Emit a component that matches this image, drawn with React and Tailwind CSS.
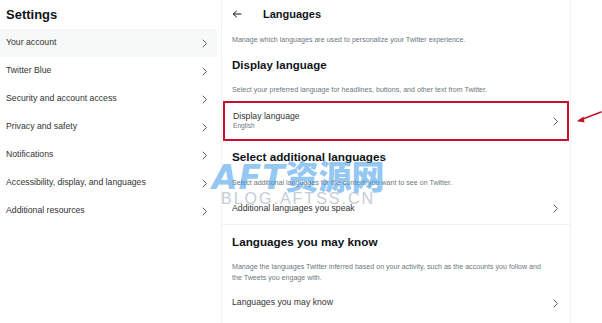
import React from "react";

const Chevron = () => (
  <svg width="6" height="9" viewBox="0 0 6 9" fill="none">
    <path d="M1 1l3.5 3.5L1 8" stroke="#536471" strokeWidth="1" strokeLinecap="round" strokeLinejoin="round" />
  </svg>
);

const leftItems = [
  "Your account",
  "Twitter Blue",
  "Security and account access",
  "Privacy and safety",
  "Notifications",
  "Accessibility, display, and languages",
  "Additional resources",
];

export default function App() {
  return (
    <div
      className="relative w-[602px] h-[323px] overflow-hidden bg-white flex text-[#0f1419]"
      style={{ fontFamily: '"Liberation Sans", Arial, sans-serif' }}
    >
      {/* Left column */}
      <div className="w-[222px] shrink-0 border-r border-[#eff3f4] flex flex-col">
        <div className="h-[29px] flex items-center pl-[6px] text-[13px] font-bold">Settings</div>
        {leftItems.map((t, i) => (
          <div
            key={t}
            className={`h-[28px] flex items-center justify-between pl-[6px] pr-[9px] mr-[4px] text-[8.7px] text-[#333] ${
              i === 0 ? "bg-[#f7f8f8]" : ""
            }`}
          >
            <span>{t}</span>
            <Chevron />
          </div>
        ))}
      </div>

      {/* Right column */}
      <div className="w-[349px] shrink-0 border-r border-[#eff3f4] flex flex-col">
        <div className="h-[28px] flex items-center pl-[10px]">
          <svg width="10" height="8" viewBox="0 0 10 8" fill="none">
            <path d="M9 4H1.5M4.5 1L1.2 4l3.3 3" stroke="#0f1419" strokeWidth="1" strokeLinecap="round" strokeLinejoin="round" />
          </svg>
          <span className="ml-[21px] text-[11px] font-bold">Languages</span>
        </div>
        <div className="h-[24px] flex items-center pl-[10px] text-[7.1px] text-[#6b7780]">
          Manage which languages are used to personalize your Twitter experience.
        </div>
        <div className="h-[28px] flex items-center pl-[10px] text-[11.5px] font-bold">Display language</div>
        <div className="h-[21px] flex items-center pl-[10px] text-[7.1px] text-[#6b7780]">
          Select your preferred language for headlines, buttons, and other text from Twitter.
        </div>
        <div className="h-[40px] mx-[1px] border-[2.5px] border-[#c8102e] flex items-center justify-between pl-[8px] pr-[8px]">
          <div className="flex flex-col leading-[10px]">
            <span className="text-[8.7px] text-[#333]">Display language</span>
            <span className="text-[6.6px] text-[#6b7780]">English</span>
          </div>
          <Chevron />
        </div>
        <div className="h-[32px] flex items-center pl-[10px] text-[11.7px] font-bold">Select additional languages</div>
        <div className="h-[20px] flex items-center pl-[10px] text-[7.1px] text-[#6b7780]">
          Select additional languages for the content you want to see on Twitter.
        </div>
        <div className="h-[32px] flex items-center justify-between pl-[10px] pr-[11px] text-[8.7px] text-[#333] border-b border-[#eff3f4]">
          <span>Additional languages you speak</span>
          <Chevron />
        </div>
        <div className="h-[34px] flex items-center pl-[10px] text-[11.7px] font-bold">Languages you may know</div>
        <div className="h-[29px] pt-[3px] pl-[10px] pr-[20px] text-[7.1px] leading-[11px] text-[#6b7780]">
          Manage the languages Twitter inferred based on your activity, such as the accounts you follow and the Tweets you engage with.
        </div>
        <div className="h-[30px] flex items-center justify-between pl-[10px] pr-[11px] text-[8.7px] text-[#333]">
          <span>Languages you may know</span>
          <Chevron />
        </div>
      </div>

      {/* Red arrow annotation */}
      <svg className="absolute left-[574px] top-[108px]" width="28" height="18" viewBox="0 0 28 18" fill="none">
        <path d="M27 4L5 12.5" stroke="#c0162b" strokeWidth="1.6" strokeLinecap="round" />
        <path d="M3 13.3L9.5 8.5L10.5 14.5Z" fill="#c0162b" />
      </svg>

      {/* Watermark */}
      <div className="absolute left-[212px] top-[156px] flex items-baseline text-[33px] leading-[38px] text-[#3d9be9] opacity-55 pointer-events-none">
        <span
          className="italic font-bold tracking-[1px]"
          style={{ fontFamily: '"DejaVu Sans", sans-serif' }}
        >
          AFT
        </span>
        <span className="font-black" style={{ fontFamily: '"Noto Sans CJK SC", sans-serif' }}>
          资源网
        </span>
      </div>
      <div
        className="absolute left-[221px] top-[190px] text-[16px] leading-[18px] tracking-[2px] text-[#8a9bb0] opacity-50 pointer-events-none"
        style={{ fontFamily: '"Liberation Sans", Arial, sans-serif' }}
      >
        BLOG.AFTSS.CN
      </div>
    </div>
  );
}
